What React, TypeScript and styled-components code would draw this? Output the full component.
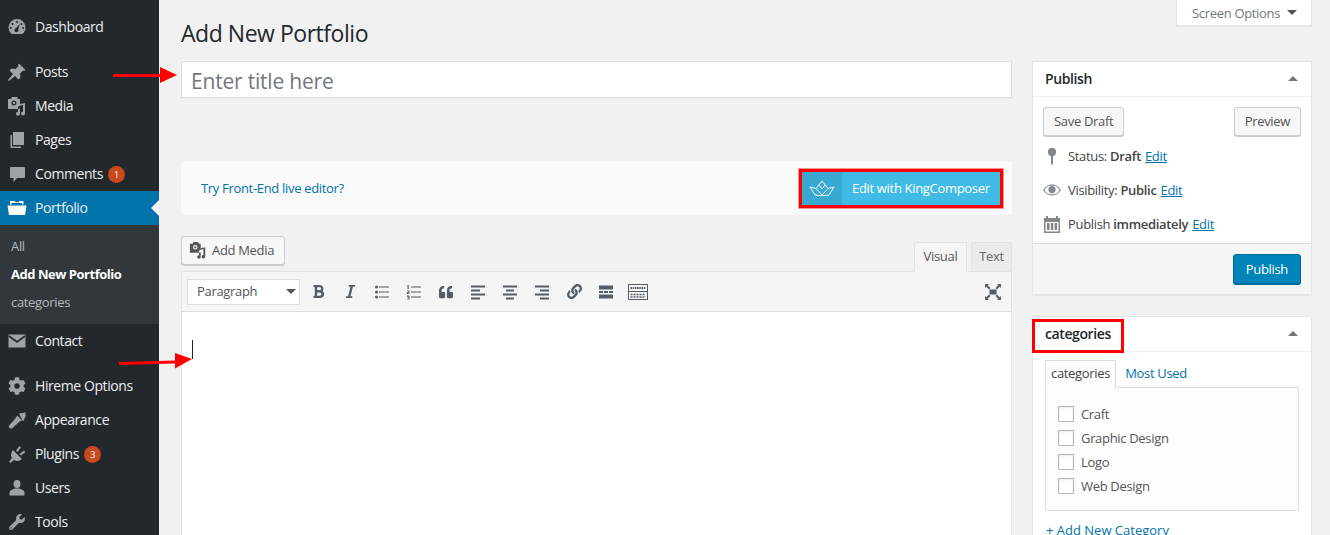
import { ReactNode } from "react";
import styled, { createGlobalStyle } from "styled-components";
import { FaBold, FaCog, FaItalic, FaLink, FaQuoteLeft, FaWrench } from "react-icons/fa";

const FONT = `"Open Sans", "Noto Sans", "Liberation Sans", sans-serif`;

const GlobalStyle = createGlobalStyle`
  html, body {
    margin: 0;
    height: 535px;
    overflow: hidden;
    background: #f1f1f1;
  }
  body {
    font-family: ${FONT};
    font-size: 13px;
    letter-spacing: -0.32px;
    color: #444;
  }
  * { box-sizing: border-box; }
`;

// drawn icons
const Icon = ({ size = 20, children }: { size?: number; children: ReactNode }) => (
  <svg width={size} height={size} viewBox="0 0 20 20" fill="currentColor">
    {children}
  </svg>
);

const MediaIcon = ({ size = 20 }: { size?: number }) => (
  <Icon size={size}>
    <path fillRule="evenodd" d="M1 3h3l1-2h5l1 2h2v7l-2 .5V13H1z M7 4.500a2.500 2.500 0 1 0 0 5a2.500 2.500 0 0 0 0-5z" />
    <circle cx="7" cy="7" r="1.200" />
    <path d="M18 7v10.500a2 2 0 1 1-2-2V9l-3 .8v8a2 2 0 1 1-2-2v-3h2V8z" />
  </Icon>
);

const DashIcon = () => (
  <Icon>
    <path
      fillRule="evenodd"
      d="M10 2a8.500 8.500 0 0 1 8.500 8.500c0 2.700-1.200 5-3 6.500h-11a8.500 8.500 0 0 1-3-6.500A8.500 8.500 0 0 1 10 2z M10 4a1 1 0 1 0 0 2a1 1 0 0 0 0-2z M5.500 6a1 1 0 1 0 0 2a1 1 0 0 0 0-2z M14.500 6a1 1 0 1 0 0 2a1 1 0 0 0 0-2z M3.800 10a1 1 0 1 0 0 2a1 1 0 0 0 0-2z M16.200 10a1 1 0 1 0 0 2a1 1 0 0 0 0-2z M12.500 7L9 11.200a2 2 0 1 0 2.300 1.200z"
    />
  </Icon>
);

const PostsIcon = () => (
  <Icon>
    <path d="M12 1.500l6.500 6.500-1.500 1-1-.5-3 3 .5 4-2 2-3.500-3.500-6 5-1-1 5-6-3.500-3.500 2-2 4 .5 3-3-.5-1z" />
  </Icon>
);

const PagesIcon = () => (
  <Icon>
    <path d="M6 2h11v13H6z" />
    <path d="M3.500 5H5v11.500h9V18H3.500z" />
  </Icon>
);

const CommentIcon = () => (
  <Icon>
    <path d="M4 3h13a1 1 0 0 1 1 1v9a1 1 0 0 1-1 1h-7l-3.500 4V14H4a1 1 0 0 1-1-1V4a1 1 0 0 1 1-1z" />
  </Icon>
);

const FolderIcon = () => (
  <Icon>
    <path d="M3 6.500V3h4.500l1 1.300H12V3h4.500v3.500H15V5H4.500v1.500z" />
    <path d="M.500 7.500h19l-1.500 9.500H2z" />
  </Icon>
);

const MailIcon = () => (
  <Icon>
    <path d="M1.500 3.500h17v13h-17z" />
    <path d="M2 5l8 6 8-6" fill="none" stroke="#23282d" strokeWidth="1.600" />
  </Icon>
);

const BrushIcon = () => (
  <Icon>
    <path d="M12 3.500l7-1-1 2 1 .5-2 5-1 1.500z" />
    <path d="M10.500 5.500l4.500 5-3 1.500-1 1-5.500 5a1.600 1.600 0 0 1-3-3l5-5.500z" />
  </Icon>
);

const PlugIcon = () => (
  <Icon>
    <path d="M6 6l9 9-2.500 1.500c-2 1-4 .5-5.500-.5L3.500 19 2 17.500 5 14c-1-1.500-1.500-3.500-.5-5.500z" />
    <path d="M9 6.500l3.500-4.500 1.500 1.500-3.500 4.500zM12.500 10l4.500-3.500 1.500 1.500-4.500 3.500z" />
  </Icon>
);

const UserIcon = () => (
  <Icon>
    <ellipse cx="10" cy="6" rx="3.500" ry="4" />
    <path d="M2.500 17.500V15c0-3 3.500-4.500 7.500-4.500s7.500 1.500 7.500 4.500v2.500z" />
  </Icon>
);

const PinIcon = () => (
  <svg width="12" height="18" viewBox="0 0 12 18" fill="#82878c">
    <circle cx="6" cy="5" r="4.200" />
    <path d="M5 8h2v9l-1 1-1-1z" />
  </svg>
);

const EyeIcon = () => (
  <svg width="20" height="14" viewBox="0 0 20 14" fill="#82878c">
    <path
      fillRule="evenodd"
      d="M10 1c4.500 0 8 3 10 6-2 3-5.500 6-10 6S2 10 0 7c2-3 5.500-6 10-6z M10 2.200A8.700 8.700 0 0 0 1.600 7a8.700 8.700 0 0 0 8.400 4.800A8.700 8.700 0 0 0 18.400 7 8.700 8.700 0 0 0 10 2.200z"
    />
    <circle cx="10" cy="6.500" r="4" />
  </svg>
);

const CalendarIcon = () => (
  <svg width="18" height="18" viewBox="0 0 18 18" fill="#82878c">
    <path fillRule="evenodd" d="M1 3h2V1h2v2h8V1h2v2h2v15H1z M2.500 7v9.500h13V7z" />
    <path d="M4 8h2.500v7H4zM7.800 8h2.500v7H7.800zM11.600 8h2.500v7h-2.500z" />
  </svg>
);

const CrownIcon = () => (
  <svg width="26" height="16" viewBox="0 0 26 16" fill="none" stroke="#fff" strokeWidth="0.9">
    <path d="M1 7l6 1.500L13 1l6 7.500L25 7l-5 8c-4 .8-10 .8-14 0z" />
    <path d="M7 8.500l6 6.500 6-6.500M10 5l3 4 3-4" />
  </svg>
);

const ListBullet = () => (
  <svg width="20" height="20" viewBox="0 0 20 20" fill="#555d66">
    <circle cx="4.500" cy="5" r="1.500" />
    <circle cx="4.500" cy="10" r="1.500" />
    <circle cx="4.500" cy="15" r="1.500" />
    <path d="M7 4.500h10v1H7zM7 9.500h10v1H7zM7 14.500h10v1H7z" />
  </svg>
);

const ListNumber = () => (
  <svg width="20" height="20" viewBox="0 0 20 20" fill="#555d66">
    <path d="M7 4.500h10v1H7zM7 9.500h10v1H7zM7 14.500h10v1H7z" />
    <path d="M3.500 3h1.200v4H3.500zM3 8.500h2.500v2.200H4v.6h1.500v.8H3V10h1.500v-.7H3zM3 13.500h2.500V17.500H3v-.8h1.500v-.8H3.400v-.6h1.100v-.6H3z" />
  </svg>
);

const ALIGN_PATHS = {
  left: "M3 3.500h14v2H3zM3 7.500h9v2H3zM3 11.500h14v2H3zM3 15.500h9v2H3z",
  center: "M3 3.500h14v2H3zM6 7.500h8v2H6zM3 11.500h14v2H3zM6 15.500h8v2H6z",
  right: "M3 3.500h14v2H3zM8 7.500h9v2H8zM3 11.500h14v2H3zM8 15.500h9v2H8z",
};

const Align = ({ mode }: { mode: keyof typeof ALIGN_PATHS }) => (
  <svg width="20" height="20" viewBox="0 0 20 20" fill="#555d66">
    <path d={ALIGN_PATHS[mode]} />
  </svg>
);

const MoreTag = () => (
  <svg width="20" height="20" viewBox="0 0 20 20" fill="#555d66">
    <path d="M3 3.500h14v4H3zM3 9h4v2H3zM8 9h4v2H8zM13 9h4v2h-4zM3 12.500h14v4H3z" />
  </svg>
);

const KitchenSink = () => (
  <svg width="20" height="20" viewBox="0 0 20 20" fill="none" stroke="#555d66">
    <rect x=".500" y="2.500" width="19" height="15" />
    <path d="M.500 9.500h19" />
    <path d="M2.500 6h15" strokeWidth="2" strokeDasharray="1.500 .7" />
    <path d="M2.500 12.500h15M2.500 15h15" strokeWidth="1.500" strokeDasharray="2 1" />
  </svg>
);

const FullscreenIcon = () => (
  <svg width="18" height="18" viewBox="0 0 18 18" fill="#555d66">
    <path d="M1 1h4L3.700 2.300 6.500 5 5 6.500 2.300 3.700 1 5zM17 1v4l-1.300-1.300L13 6.500 11.500 5l2.800-2.700L13 1zM1 17v-4l1.300 1.300L5 11.500 6.500 13l-2.800 2.700L5 17zM17 17h-4l1.300-1.300-2.800-2.700 1.500-1.500 2.700 2.800L17 13z" />
    <rect x="5.500" y="6.500" width="7" height="5" />
  </svg>
);

const Caret = styled.span<{ $up?: boolean; $size?: number }>`
  display: inline-block;
  width: 0;
  height: 0;
  border-left: ${(p) => p.$size ?? 5}px solid transparent;
  border-right: ${(p) => p.$size ?? 5}px solid transparent;
  ${(p) =>
    p.$up
      ? `border-bottom: ${p.$size ?? 5}px solid #72777c;`
      : `border-top: ${p.$size ?? 5}px solid #555;`}
`;

const Page = styled.div`
  display: flex;
  width: 1330px;
  height: 535px;
  overflow: hidden;
  position: relative;
`;

// ---- sidebar ----
const Sidebar = styled.nav`
  width: 159px;
  flex: none;
  height: 535px;
  padding-top: 10px;
  background: #23282d;
`;

const MenuItem = styled.div<{ $active?: boolean; $gap?: boolean }>`
  position: relative;
  display: flex;
  align-items: center;
  height: 34px;
  padding-left: 7px;
  margin-bottom: ${(p) => (p.$gap ? 11 : 0)}px;
  font-size: 14px;
  letter-spacing: -0.42px;
  color: #eee;
  background: ${(p) => (p.$active ? "#0073aa" : "transparent")};
  ${(p) =>
    p.$active &&
    `&::after {
      content: "";
      position: absolute;
      right: 0;
      top: 9px;
      border: 8px solid transparent;
      border-right-color: #f1f1f1;
      border-left: 0;
    }`}
`;

const MenuIcon = styled.span<{ $active?: boolean }>`
  display: flex;
  align-items: center;
  justify-content: center;
  width: 20px;
  height: 20px;
  margin-right: 8px;
  color: ${(p) => (p.$active ? "#fff" : "#9ea3a8")};
`;

const MenuLabel = styled.span`
  margin-bottom: 2px;
`;

const Badge = styled.span`
  display: inline-flex;
  align-items: center;
  justify-content: center;
  width: 17px;
  height: 17px;
  margin-left: 5px;
  border-radius: 50%;
  background: #ca4a1f;
  color: #fff;
  font-size: 9px;
`;

const SubMenu = styled.div`
  display: flex;
  flex-direction: column;
  height: 99px;
  padding-top: 7px;
  background: #32373c;
`;

const SubItem = styled.div<{ $current?: boolean }>`
  height: 28px;
  padding-left: 11px;
  line-height: 28px;
  font-size: 13px;
  letter-spacing: ${(p) => (p.$current ? -0.47 : -0.32)}px;
  font-weight: ${(p) => (p.$current ? 700 : 400)};
  color: ${(p) => (p.$current ? "#fff" : "#b4b9be")};
`;

// ---- main ----
const Content = styled.main`
  flex: 1;
  min-width: 0;
  padding-left: 22px;
`;

const Header = styled.header`
  display: flex;
  justify-content: space-between;
  align-items: flex-start;
  height: 61px;
  padding-right: 18px;
`;

const Title = styled.h1`
  margin: 19px 0 0;
  font-size: 23px;
  line-height: 29px;
  letter-spacing: -0.47px;
  font-weight: 400;
  color: #23282d;
`;

const ScreenOptions = styled.div`
  display: flex;
  align-items: center;
  gap: 7px;
  width: 136px;
  height: 26px;
  padding-left: 15px;
  background: #fff;
  border: 1px solid #e5e5e5;
  border-top: 0;
  box-shadow: 0 1px 1px rgba(0, 0, 0, 0.04);
  font-size: 13px;
  color: #72777c;
`;

const Columns = styled.div`
  display: flex;
  gap: 20px;
  padding-right: 18px;
`;

const Left = styled.div`
  width: 831px;
  flex: none;
`;

const TitleInput = styled.div`
  height: 37px;
  padding-left: 9px;
  background: #fff;
  border: 1px solid #ddd;
  font-size: 21px;
  letter-spacing: -0.2px;
  line-height: 38px;
  color: #72777c;
`;

const LiveBar = styled.div`
  display: flex;
  align-items: center;
  justify-content: space-between;
  height: 54px;
  margin-top: 63px;
  padding: 0 10px 0 20px;
  background: #fafafa;
  font-size: 13px;
  color: #0073aa;
`;

const KingButton = styled.div`
  display: flex;
  align-items: center;
  width: 204px;
  height: 39px;
  margin-right: -1px;
  border: 3px solid #f00;
  outline: 1px solid rgba(255, 0, 0, 0.4);
  background: #3fbbe6;
  color: #fff;
  font-size: 13px;
`;

const KingLogo = styled.span`
  display: flex;
  align-items: center;
  justify-content: center;
  width: 40px;
  height: 100%;
  margin-right: 10px;
  background: #3aa9d1;
`;

const EditorTop = styled.div`
  display: flex;
  justify-content: space-between;
  align-items: flex-end;
  height: 56px;
  padding-top: 21px;
`;

const Button = styled.div<{ $primary?: boolean }>`
  display: inline-flex;
  align-items: center;
  height: 29px;
  padding: 0 10px 1px;
  border: 1px solid ${(p) => (p.$primary ? "#006799" : "#ccc")};
  border-radius: 3px;
  background: ${(p) => (p.$primary ? "#0085ba" : "#f7f7f7")};
  box-shadow: 0 1px 0 ${(p) => (p.$primary ? "#006799" : "#ccc")};
  color: ${(p) => (p.$primary ? "#fff" : "#555")};
  font-size: 13px;
`;

const AddMedia = styled(Button)`
  align-self: flex-start;
  gap: 5px;
  width: 104px;
  padding: 0 0 1px 7px;
  color: #555;
`;

const Tabs = styled.div`
  display: flex;
  gap: 4px;
  margin-bottom: -1px;
`;

const Tab = styled.div<{ $on?: boolean; $width: number }>`
  width: ${(p) => p.$width}px;
  height: 30px;
  line-height: 27px;
  text-align: center;
  font-size: 13px;
  color: ${(p) => (p.$on ? "#555" : "#666")};
  background: ${(p) => (p.$on ? "#f5f5f5" : "#ebebeb")};
  border: 1px solid #e2e2e2;
  border-bottom-color: ${(p) => (p.$on ? "#f5f5f5" : "#e2e2e2")};
  position: relative;
`;

const Editor = styled.div`
  height: 264px;
  border: 1px solid #e2e2e2;
  border-bottom: 0;
  background: #fff;
`;

const Toolbar = styled.div`
  display: flex;
  align-items: center;
  height: 40px;
  padding: 0 9px 0 5px;
  background: #f5f5f5;
  border-bottom: 1px solid #ddd;
`;

const Select = styled.div`
  display: flex;
  align-items: center;
  justify-content: space-between;
  width: 113px;
  height: 26px;
  margin-right: 2px;
  padding: 0 3px 1px 9px;
  background: #fff;
  border: 1px solid #ddd;
  font-size: 13px;
  color: #555;
`;

const ToolIcon = styled.span`
  display: flex;
  align-items: center;
  justify-content: center;
  width: 32px;
  height: 20px;
  color: #555d66;
`;

const ToolSpacer = styled.span`
  flex: 1;
`;

const TextCursor = styled.div`
  width: 1px;
  height: 19px;
  margin: 28px 0 0 10px;
  background: #222;
`;

// ---- right column ----
const Right = styled.aside`
  width: 280px;
  flex: none;
`;

const Box = styled.section`
  margin-bottom: 21px;
  background: #fff;
  border: 1px solid #e5e5e5;
  box-shadow: 0 1px 1px rgba(0, 0, 0, 0.04);
`;

const BoxHead = styled.div`
  position: relative;
  display: flex;
  align-items: center;
  justify-content: space-between;
  height: 35px;
  padding: 0 13px 2px 12px;
  border-bottom: 1px solid #eee;
  font-size: 14px;
  letter-spacing: -0.4px;
  font-weight: 600;
  color: #23282d;
`;

const RedFrame = styled.span`
  position: absolute;
  left: -1px;
  top: 2px;
  width: 92px;
  height: 34px;
  border: 3px solid #f00;
`;

const Actions = styled.div`
  display: flex;
  justify-content: space-between;
  padding: 10px 10px 0;
`;

const MetaRow = styled.div`
  display: flex;
  align-items: center;
  height: 34px;
  padding-left: 10px;
  font-size: 13px;
  color: #444;
  b { font-weight: 600; }
`;

const MetaIcon = styled.span`
  display: flex;
  justify-content: center;
  width: 18px;
  margin-right: 7px;
`;

const MetaList = styled.div`
  padding-top: 3px;
`;

const Link = styled.a`
  color: #0073aa;
  text-decoration: underline;
  margin-left: 4px;
`;

const PublishFoot = styled.div`
  display: flex;
  justify-content: flex-end;
  height: 51px;
  margin-top: 2px;
  padding: 10px;
  background: #f5f5f5;
  border-top: 1px solid #ddd;
`;

const PublishButton = styled(Button)`
  height: 30px;
  padding: 0 12px 1px;
`;

const CatBody = styled.div`
  padding: 8px 12px 0;
`;

const CatTabs = styled.div`
  display: flex;
  height: 28px;
  margin-bottom: -1px;
`;

const CatTab = styled.div<{ $on?: boolean }>`
  position: relative;
  padding: 0 5px;
  font-size: 13px;
  color: ${(p) => (p.$on ? "#444" : "#0073aa")};
  ${(p) =>
    p.$on
      ? `line-height: 25px; border: 1px solid #ddd; border-bottom-color: #fdfdfd; background: #fdfdfd;`
      : `line-height: 27px; margin-left: 4px;`}
`;

const CatPanel = styled.div`
  display: flex;
  flex-direction: column;
  gap: 8px;
  height: 124px;
  padding: 18px 12px 0;
  background: #fdfdfd;
  border: 1px solid #ddd;
`;

const CatRow = styled.label`
  display: flex;
  align-items: center;
  gap: 7px;
  height: 16px;
  font-size: 13px;
  color: #555;
`;

const Check = styled.span`
  width: 16px;
  height: 16px;
  background: #fff;
  border: 1px solid #b4b9be;
  box-shadow: inset 0 1px 2px rgba(0, 0, 0, 0.1);
`;

const AddCategory = styled.div`
  margin-top: 10px;
  padding-left: 1px;
  color: #0073aa;
  font-size: 13px;
  letter-spacing: 0;
  line-height: 18px;
`;

const Arrow = styled.svg<{ $left: number; $top: number }>`
  position: absolute;
  left: ${(p) => p.$left}px;
  top: ${(p) => p.$top}px;
`;

type Entry = { label: string; icon: ReactNode; badge?: number; gap?: boolean };

const TOP: Entry[] = [
  { label: "Dashboard", icon: <DashIcon />, gap: true },
  { label: "Posts", icon: <PostsIcon /> },
  { label: "Media", icon: <MediaIcon /> },
  { label: "Pages", icon: <PagesIcon /> },
  { label: "Comments", icon: <CommentIcon />, badge: 1 },
];

const BOTTOM: Entry[] = [
  { label: "Contact", icon: <MailIcon />, gap: true },
  { label: "Hireme Options", icon: <FaCog size={18} /> },
  { label: "Appearance", icon: <BrushIcon /> },
  { label: "Plugins", icon: <PlugIcon />, badge: 3 },
  { label: "Users", icon: <UserIcon /> },
  { label: "Tools", icon: <FaWrench size={16} /> },
];

const renderItem = (e: Entry) => (
  <MenuItem key={e.label} $gap={e.gap}>
    <MenuIcon>{e.icon}</MenuIcon>
    <MenuLabel>{e.label}</MenuLabel>
    {e.badge ? <Badge>{e.badge}</Badge> : null}
  </MenuItem>
);

const App = () => (
  <Page>
    <GlobalStyle />
    <Sidebar>
      {TOP.map(renderItem)}
      <MenuItem $active>
        <MenuIcon $active>
          <FolderIcon />
        </MenuIcon>
        <MenuLabel>Portfolio</MenuLabel>
      </MenuItem>
      <SubMenu>
        <SubItem>All</SubItem>
        <SubItem $current>Add New Portfolio</SubItem>
        <SubItem>categories</SubItem>
      </SubMenu>
      {BOTTOM.map(renderItem)}
    </Sidebar>

    <Content>
      <Header>
        <Title>Add New Portfolio</Title>
        <ScreenOptions>
          Screen Options <Caret $size={5} />
        </ScreenOptions>
      </Header>

      <Columns>
        <Left>
          <TitleInput>Enter title here</TitleInput>
          <LiveBar>
            Try Front-End live editor?
            <KingButton>
              <KingLogo>
                <CrownIcon />
              </KingLogo>
              Edit with KingComposer
            </KingButton>
          </LiveBar>
          <EditorTop>
            <AddMedia>
              <MediaIcon size={18} /> Add Media
            </AddMedia>
            <Tabs>
              <Tab $on $width={53}>Visual</Tab>
              <Tab $width={41}>Text</Tab>
            </Tabs>
          </EditorTop>
          <Editor>
            <Toolbar>
              <Select>
                Paragraph <Caret $size={5} />
              </Select>
              <ToolIcon><FaBold size={15} /></ToolIcon>
              <ToolIcon><FaItalic size={15} /></ToolIcon>
              <ToolIcon><ListBullet /></ToolIcon>
              <ToolIcon><ListNumber /></ToolIcon>
              <ToolIcon><FaQuoteLeft size={14} /></ToolIcon>
              <ToolIcon><Align mode="left" /></ToolIcon>
              <ToolIcon><Align mode="center" /></ToolIcon>
              <ToolIcon><Align mode="right" /></ToolIcon>
              <ToolIcon><FaLink size={15} /></ToolIcon>
              <ToolIcon><MoreTag /></ToolIcon>
              <ToolIcon><KitchenSink /></ToolIcon>
              <ToolSpacer />
              <FullscreenIcon />
            </Toolbar>
            <TextCursor />
          </Editor>
        </Left>

        <Right>
          <Box>
            <BoxHead>
              Publish <Caret $up $size={5} />
            </BoxHead>
            <Actions>
              <Button>Save Draft</Button>
              <Button>Preview</Button>
            </Actions>
            <MetaList>
              <MetaRow>
                <MetaIcon><PinIcon /></MetaIcon>
                Status:&nbsp;<b>Draft</b>
                <Link>Edit</Link>
              </MetaRow>
              <MetaRow>
                <MetaIcon><EyeIcon /></MetaIcon>
                Visibility:&nbsp;<b>Public</b>
                <Link>Edit</Link>
              </MetaRow>
              <MetaRow>
                <MetaIcon><CalendarIcon /></MetaIcon>
                Publish&nbsp;<b>immediately</b>
                <Link>Edit</Link>
              </MetaRow>
            </MetaList>
            <PublishFoot>
              <PublishButton $primary>Publish</PublishButton>
            </PublishFoot>
          </Box>

          <Box>
            <BoxHead>
              categories <Caret $up $size={5} />
              <RedFrame />
            </BoxHead>
            <CatBody>
              <CatTabs>
                <CatTab $on>categories</CatTab>
                <CatTab>Most Used</CatTab>
              </CatTabs>
              <CatPanel>
                {["Craft", "Graphic Design", "Logo", "Web Design"].map((c) => (
                  <CatRow key={c}>
                    <Check />
                    {c}
                  </CatRow>
                ))}
              </CatPanel>
              <AddCategory>+ Add New Category</AddCategory>
            </CatBody>
          </Box>
        </Right>
      </Columns>
    </Content>

    <Arrow $left={113} $top={67} width="64" height="16" viewBox="0 0 64 16">
      <path d="M0 7h47V0l17 8-17 8v-6H0z" fill="#f00" />
    </Arrow>
    <Arrow $left={119} $top={352} width="74" height="18" viewBox="0 0 74 18">
      <path d="M0 10l56-1.500V1l17 6-17 9.500V11.500L0 13z" fill="#f00" />
    </Arrow>
  </Page>
);

export default App;
